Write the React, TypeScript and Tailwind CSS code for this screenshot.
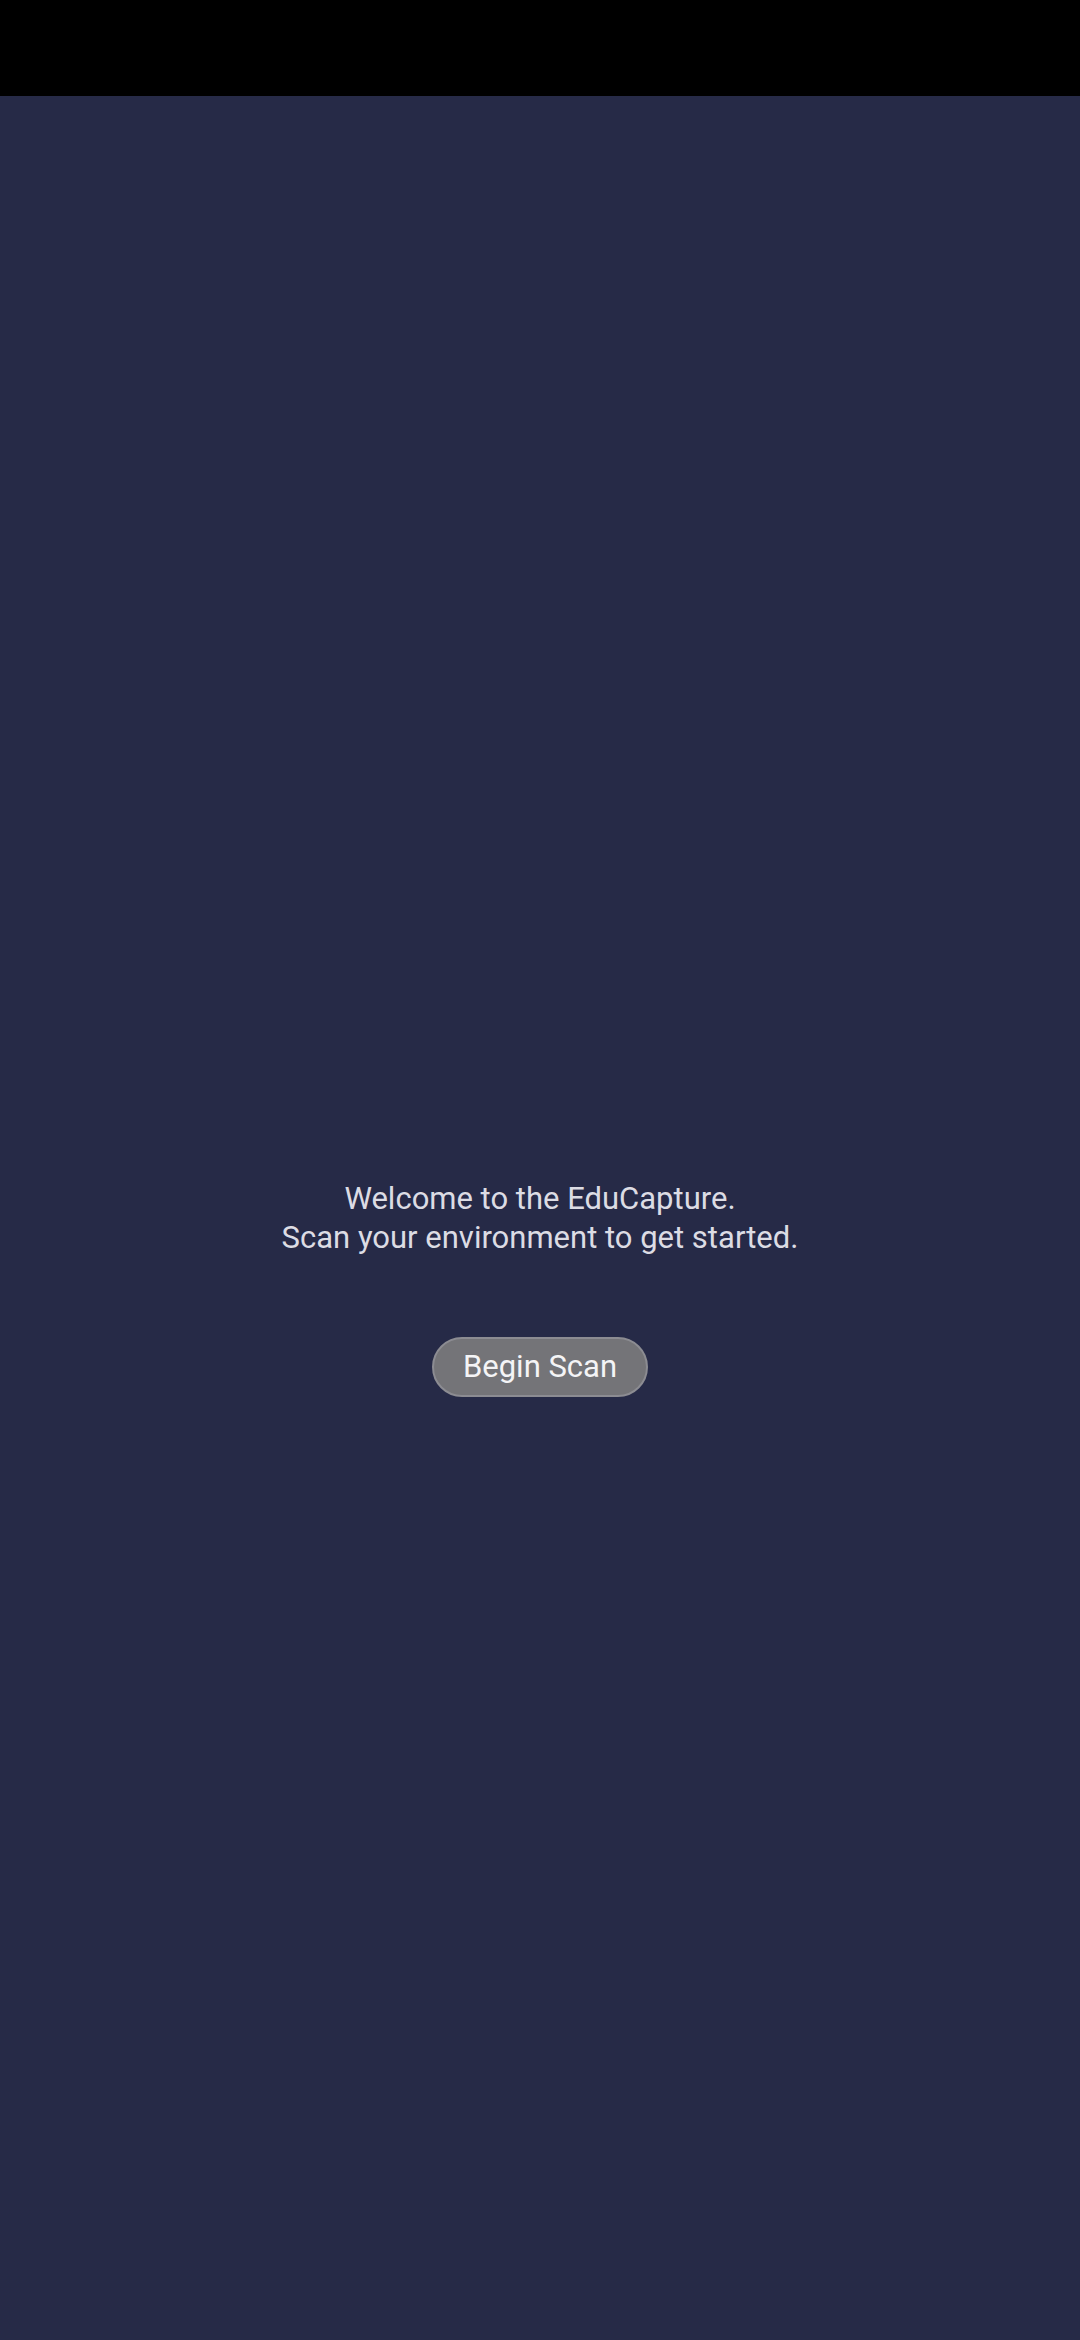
import type { FC } from "react";

const App: FC = () => {
  return (
    <div className="flex min-h-[2340px] w-[1080px] flex-col bg-[#262a47] font-['Roboto',sans-serif]">
      <div className="h-[96px] w-full bg-black" />
      <main className="flex flex-1 flex-col items-center pt-[1083px]">
        <p className="text-center text-[31px] leading-[39px] text-[#dcdce4]">
          Welcome to the EduCapture.
          <br />
          Scan your environment to get started.
        </p>
        <button
          type="button"
          className="mt-[80px] flex h-[60px] w-[216px] items-center justify-center rounded-full border-2 border-[#8c8c92] bg-[#747478] text-[31px] text-[#f4f4f6]"
        >
          Begin Scan
        </button>
      </main>
    </div>
  );
};

export default App;
